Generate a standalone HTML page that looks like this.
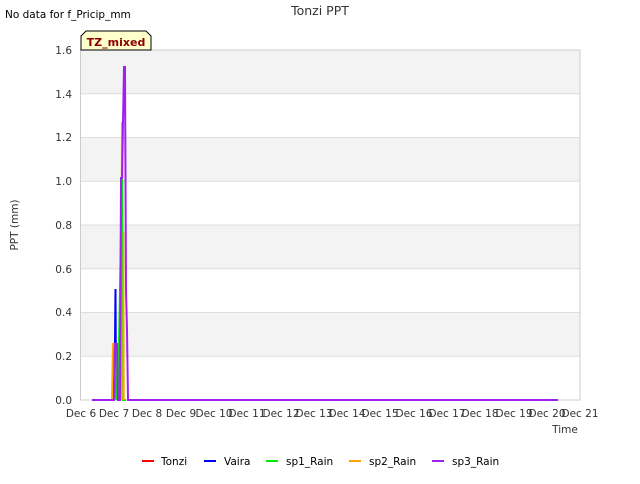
<!DOCTYPE html>
<html><head><meta charset="utf-8"><style>
body{margin:0;width:640px;height:480px;background:#fff;overflow:hidden;font-family:"DejaVu Sans","Liberation Sans",sans-serif}
</style></head><body>
<svg width="640" height="480" xmlns="http://www.w3.org/2000/svg" font-family="DejaVu Sans, Liberation Sans, sans-serif">
<rect x="81" y="50" width="499" height="350" fill="#fff"/>
<rect x="81" y="50" width="499" height="43.75" fill="#f3f3f3"/>
<rect x="81" y="137.5" width="499" height="43.75" fill="#f3f3f3"/>
<rect x="81" y="225" width="499" height="43.75" fill="#f3f3f3"/>
<rect x="81" y="312.5" width="499" height="43.75" fill="#f3f3f3"/>
<g stroke="#ddd" stroke-width="1">
<line x1="81" x2="580" y1="93.75" y2="93.75"/><line x1="81" x2="580" y1="137.5" y2="137.5"/>
<line x1="81" x2="580" y1="181.25" y2="181.25"/><line x1="81" x2="580" y1="225" y2="225"/>
<line x1="81" x2="580" y1="268.75" y2="268.75"/><line x1="81" x2="580" y1="312.5" y2="312.5"/>
<line x1="81" x2="580" y1="356.25" y2="356.25"/><line x1="81" x2="580" y1="50" y2="50"/>
</g>
<rect x="80.5" y="50" width="499.5" height="350" fill="none" stroke="#ccc"/>
<g font-size="10.5" fill="#333" text-anchor="end">
<text x="72" y="404">0.0</text><text x="72" y="360">0.2</text><text x="72" y="316">0.4</text>
<text x="72" y="273">0.6</text><text x="72" y="229">0.8</text><text x="72" y="185">1.0</text>
<text x="72" y="141">1.2</text><text x="72" y="98">1.4</text><text x="72" y="54">1.6</text>
</g>
<g font-size="10.5" fill="#333" text-anchor="middle">
<text x="81" y="417">Dec 6</text><text x="114" y="417">Dec 7</text><text x="147" y="417">Dec 8</text>
<text x="181" y="417">Dec 9</text><text x="214" y="417">Dec 10</text><text x="247" y="417">Dec 11</text>
<text x="281" y="417">Dec 12</text><text x="314" y="417">Dec 13</text><text x="347" y="417">Dec 14</text>
<text x="380" y="417">Dec 15</text><text x="414" y="417">Dec 16</text><text x="447" y="417">Dec 17</text>
<text x="480" y="417">Dec 18</text><text x="514" y="417">Dec 19</text><text x="547" y="417">Dec 20</text>
<text x="580" y="417">Dec 21</text>
</g>
<text x="565" y="433" font-size="10.5" fill="#333" text-anchor="middle">Time</text>
<text x="18" y="225" font-size="10.5" fill="#333" text-anchor="middle" transform="rotate(-90 18 225)">PPT (mm)</text>
<text x="320" y="15" font-size="12.5" fill="#333" text-anchor="middle">Tonzi PPT</text>
<text x="5" y="18" font-size="10.5" fill="#000">No data for f_Pricip_mm</text>
<polyline fill="none" stroke="#0000ff" stroke-width="2" points="113,400 114,344 115,344 115.5,289 116,400"/>
<polyline fill="none" stroke="#ffa500" stroke-width="2" points="112,400 113,344 119,344 121,400 122,122 123,400"/>
<polyline fill="none" stroke="#00ee00" stroke-width="2" points="116,400 117,344 118,400 122,178 123,400 125,400 126,400"/>
<polyline fill="none" stroke="#a020f0" stroke-width="2" points="92,400 114,400 115,344 117,344 118,400 120,400 121,178 122,178 124,67 125,67 126,290 127,330 128,400 558,400"/>
<polyline fill="none" stroke="#ffa500" stroke-width="1.5" points="123,400 123.5,232 124,400"/>
<path d="M81,50 L81,36 L86,31 L146,31 L151,36 L151,50 Z" fill="#ffffcc" stroke="#000" stroke-width="1"/>
<text x="116" y="46" font-size="11" font-weight="bold" fill="#8b0000" text-anchor="middle">TZ_mixed</text>
<g font-size="10.5" fill="#000">
<line x1="142" x2="154" y1="461" y2="461" stroke="#ff0000" stroke-width="2"/><text x="161" y="465">Tonzi</text>
<line x1="204" x2="216" y1="461" y2="461" stroke="#0000ff" stroke-width="2"/><text x="224" y="465">Vaira</text>
<line x1="266" x2="278" y1="461" y2="461" stroke="#00ee00" stroke-width="2"/><text x="286" y="465">sp1_Rain</text>
<line x1="349" x2="361" y1="461" y2="461" stroke="#ffa500" stroke-width="2"/><text x="369" y="465">sp2_Rain</text>
<line x1="432" x2="444" y1="461" y2="461" stroke="#a020f0" stroke-width="2"/><text x="452" y="465">sp3_Rain</text>
</g>
</svg>
</body></html>
